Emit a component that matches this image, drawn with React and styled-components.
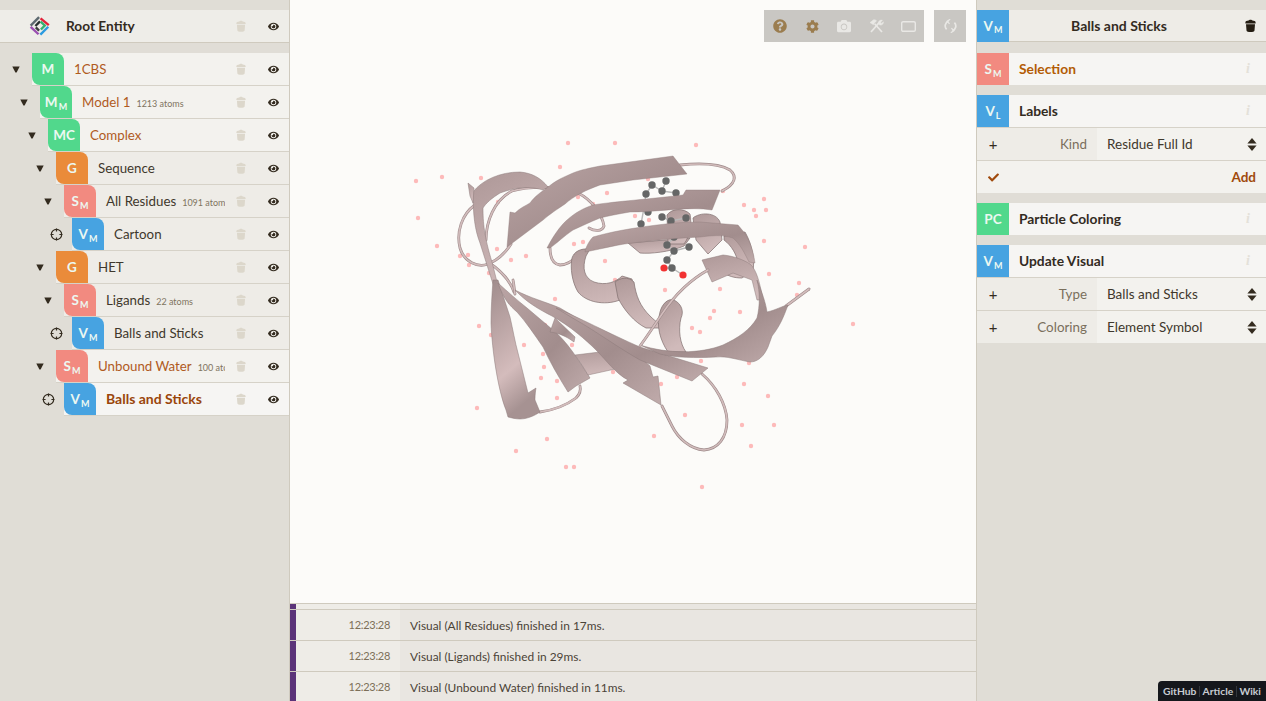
import React from 'react';
import styled, { createGlobalStyle } from 'styled-components';
import { FaEye, FaQuestionCircle, FaCog, FaCamera, FaCheck } from 'react-icons/fa';

const GlobalStyle = createGlobalStyle`
  html, body { margin: 0; padding: 0; height: 100%; overflow: hidden; }
  body {
    font-family: Lato, "Noto Sans", sans-serif;
    font-size: 14px;
    color: #332b1f;
    background: #e0ddd6;
  }
`;

const tones = {
  green: '#51d88c',
  orange: '#ea8b3a',
  pink: '#f28a80',
  blue: '#47a3e1',
};

const Page = styled.div`
  display: flex;
  height: 701px;
  width: 1266px;
  position: relative;
  overflow: hidden;
`;

const LeftPanel = styled.aside`
  width: 289px;
  flex: none;
  border-right: 1px solid #cfcabe;
  padding-top: 10px;
`;

const RightPanel = styled.aside`
  width: 289px;
  flex: none;
  border-left: 1px solid #cfcabe;
  padding-top: 10px;
`;

const Center = styled.main`
  flex: 1;
  min-width: 0;
  display: flex;
  flex-direction: column;
`;

const Viewport = styled.div`
  position: relative;
  height: 603px;
  flex: none;
  background: #fcfbf9;
  border-bottom: 1px solid #cfcabe;
  box-sizing: content-box;
`;

const Canvas = styled.svg`
  display: block;
  width: 686px;
  height: 603px;
`;

const Toolbar = styled.div`
  position: absolute;
  top: 10px;
  right: 10px;
  display: flex;
  gap: 10px;
`;

const ToolGroup = styled.div`
  display: flex;
  background: #c9c7c3;
`;

const ToolButton = styled.div`
  width: 32px;
  height: 32px;
  display: flex;
  align-items: center;
  justify-content: center;
  font-size: ${({ size }) => size || 14}px;
  color: ${({ active }) => (active ? '#9b7d4f' : '#e9e8e5')};
`;

const Log = styled.section`
  flex: 1;
  min-height: 0;
  overflow: hidden;
  background: #eeece7;
`;

const LogRow = styled.div`
  display: flex;
  height: ${({ stub }) => (stub ? 5 : 30)}px;
  border-bottom: 1px solid #cfcabe;
  font-size: 12px;
`;

const LogMark = styled.div`
  width: 6px;
  flex: none;
  background: #5b3379;
`;

const LogTime = styled.div`
  width: 104px;
  flex: none;
  padding-right: 10px;
  box-sizing: border-box;
  text-align: right;
  font-size: 11px;
  letter-spacing: -0.3px;
  line-height: 29px;
  color: #7c6f58;
`;

const LogMessage = styled.div`
  flex: 1;
  padding-left: 10px;
  font-size: 11.9px;
  line-height: 31px;
  background: #e9e6e1;
  color: #4b4337;
`;

const RootRow = styled.div`
  display: flex;
  align-items: center;
  height: 32px;
  background: #eeede8;
  border-bottom: 1px solid #cfcabe;
  margin-bottom: 10px;
`;

const LogoCell = styled.div`
  width: 66px;
  flex: none;
  display: flex;
  justify-content: center;
  padding-left: 14px;
  box-sizing: border-box;
`;

const RootTitle = styled.div`
  flex: 1;
  font-weight: 700;
  font-size: 13.7px;
  padding-bottom: 2px;
`;

const TreeRowWrap = styled.div`
  display: flex;
  align-items: stretch;
  height: 33px;
  margin-left: ${({ depth }) => depth * 8}px;
`;

const Gutter = styled.div`
  width: 32px;
  flex: none;
  display: flex;
  align-items: center;
  justify-content: center;
  padding-bottom: 1px;
  box-sizing: border-box;
`;

const RowBody = styled.div`
  flex: 1;
  min-width: 0;
  display: flex;
  align-items: center;
  height: 33px;
  box-sizing: border-box;
  border-bottom: 1px solid #d6d2c8;
  background: ${({ state }) =>
    state === 'current' ? '#f6f5f3' : state === 'path' ? '#f3f2ee' : '#eeece7'};
`;

const Badge = styled.div`
  width: 32px;
  height: 32px;
  flex: none;
  display: flex;
  align-items: center;
  justify-content: center;
  background: ${({ tone }) => tones[tone]};
  color: #ecf8f1;
  font-weight: 700;
  font-size: 13.5px;
  border-radius: ${({ square }) => (square ? '0' : '0 8px 0 8px')};
  & > sub {
    font-size: 9px;
    line-height: 1;
    margin: 8px 0 0 1px;
    vertical-align: baseline;
  }
`;

const RowTitle = styled.div`
  flex: 1;
  min-width: 0;
  padding-left: 10px;
  padding-bottom: ${({ state }) => (state === 'current' ? 2 : 0)}px;
  white-space: nowrap;
  overflow: hidden;
  font-size: ${({ state }) => (state === 'current' ? 14 : 13.3)}px;
  font-weight: ${({ state }) => (state === 'current' ? 700 : 400)};
  color: ${({ state }) =>
    state === 'current' ? '#9a450b' : state === 'path' ? '#b05b1e' : '#3f382c'};
`;

const RowNote = styled.small`
  font-size: 9px;
  margin-left: 6px;
  color: #7f745f;
`;

const IconCell = styled.div`
  width: 32px;
  flex: none;
  display: flex;
  align-items: center;
  justify-content: center;
  color: ${({ muted }) => (muted ? '#dcd7cb' : '#332b1f')};
  font-size: 11px;
`;

const PanelHeader = styled.div`
  display: flex;
  align-items: center;
  height: 32px;
  box-sizing: border-box;
  background: #eeece7;
  border-bottom: 1px solid #cfcabe;
  margin-bottom: 11px;
`;

const HeaderTitle = styled.div`
  flex: 1;
  text-align: center;
  font-weight: 700;
  font-size: 14px;
  padding-right: 5px;
`;

const Section = styled.section`
  margin-bottom: 10px;
`;

const SectionHead = styled.div`
  display: flex;
  align-items: center;
  height: 32px;
  background: #f6f5f3;
  border-bottom: ${({ open }) => (open ? '1px solid #d6d2c8' : 'none')};
`;

const SectionTitle = styled.div`
  flex: 1;
  padding-left: 10px;
  padding-bottom: 2px;
  font-weight: 700;
  font-size: 13.8px;
  color: ${({ accent }) => (accent ? '#b35c05' : '#332b1f')};
`;

const InfoMark = styled.span`
  width: 32px;
  text-align: center;
  padding-right: 2px;
  font-family: "Liberation Serif", serif;
  font-style: italic;
  font-weight: 700;
  font-size: 14px;
  color: #e4e1d9;
`;

const ControlRow = styled.div`
  display: flex;
  height: 33px;
  box-sizing: border-box;
  border-bottom: 1px solid #d6d2c8;
  background: #f3f2ee;
  &:last-child { border-bottom: none; height: 32px; }
`;

const ControlLabel = styled.div`
  width: 120px;
  flex: none;
  display: flex;
  align-items: center;
  background: #eeece7;
  color: #7a6f5c;
  font-size: 13.4px;
  padding-right: 10px;
  box-sizing: border-box;
`;

const PlusMark = styled.span`
  width: 32px;
  flex: none;
  text-align: center;
  color: #332b1f;
  font-size: 15px;
  line-height: 1;
`;

const LabelText = styled.span`
  flex: 1;
  text-align: right;
`;

const ControlValue = styled.div`
  flex: 1;
  display: flex;
  align-items: center;
  justify-content: space-between;
  padding: 0 9px 0 10px;
  font-size: 13.5px;
  color: #3f382c;
`;

const ActionRow = styled.div`
  display: flex;
  align-items: center;
  height: 32px;
  background: #f3f2ee;
`;

const CheckCell = styled.div`
  width: 32px;
  display: flex;
  justify-content: center;
  color: #a04a0c;
  font-size: 11px;
`;

const ActionText = styled.div`
  flex: 1;
  text-align: right;
  padding-right: 10px;
  font-weight: 700;
  font-size: 13.5px;
  color: #a04a0c;
`;

const Links = styled.nav`
  position: absolute;
  right: 0;
  bottom: 0;
  height: 20px;
  width: 108px;
  box-sizing: border-box;
  background: #15171c;
  border-top-left-radius: 4px;
  display: flex;
  align-items: center;
  justify-content: space-between;
  padding: 0 5px;
  font-size: 10.3px;
  font-weight: 700;
  color: #c8ccd2;
`;

const LinkSep = styled.i`
  width: 1px;
  height: 11px;
  background: #34373d;
`;

const Trash = ({ dark }) => (
  <svg
    width={dark ? 11 : 10}
    height={dark ? 14 : 12.7}
    viewBox="0 0 11 14"
    fill={dark ? '#241d12' : 'currentColor'}
  >
    <path d="M3.6 1.6C3.8.6 7.2.6 7.4 1.6 9.2 1.9 10.6 2.4 10.6 3.2V4.4H.4V3.2C.4 2.4 1.8 1.9 3.6 1.6Z" />
    <path d="M1 5.2H10L9.5 11.6C9.4 13.6 1.6 13.6 1.5 11.6Z" />
  </svg>
);

const Triangle = () => (
  <svg width="8" height="7" viewBox="0 0 8 7">
    <path d="M.3.6H7.7L4.6 6.4H3.4Z" fill="#332b1f" />
  </svg>
);

const Target = () => (
  <svg width="13" height="13" viewBox="0 0 13 13" fill="none" stroke="#332b1f" strokeWidth="1.2">
    <circle cx="6.5" cy="6.5" r="5.2" />
    <path d="M6.5 .6V3.6M6.5 9.4V12.4M.6 6.5H3.6M9.4 6.5H12.4" />
  </svg>
);

const UpDown = () => (
  <svg width="10" height="13" viewBox="0 0 10 13" fill="#332b1f">
    <path d="M5 0L9.6 5.4H.4Z" />
    <path d="M5 13L9.6 7.6H.4Z" />
  </svg>
);

const Logo = () => (
  <svg width="22" height="22" viewBox="0 0 24 24" fill="none" strokeWidth="2.6">
    <path d="M1.8 11.5L11 2.4" stroke="#5d6a70" />
    <path d="M12.6 3.6L21.6 11" stroke="#e2223a" />
    <path d="M21 12.8L12.4 21.4" stroke="#2b9be0" />
    <path d="M1.8 13L10.4 21" stroke="#9a4fb0" />
    <path d="M7 12L12 7" stroke="#27302f" />
    <path d="M12.6 7.2L17.2 11.4L13 15.8" stroke="#35b070" />
    <path d="M7.4 13.6L11 17" stroke="#3a3f3d" />
  </svg>
);

const RectIcon = () => (
  <svg width="15" height="11" viewBox="0 0 15 11" fill="none" stroke="currentColor" strokeWidth="1.4">
    <rect x=".7" y=".7" width="13.6" height="9.6" rx="1.4" />
  </svg>
);

const ToolsIcon = () => (
  <svg width="15" height="14" viewBox="0 0 15 14" fill="none" stroke="currentColor">
    <path d="M2 13L10.4 3.4" strokeWidth="1.7" />
    <path d="M9.4 4.6C9 2.4 11 .6 13.4 1.2L11.6 3.2 12.6 4.4 14.4 2.8C14.8 5 12.6 6.8 10.4 5.8Z" fill="currentColor" strokeWidth=".5" />
    <path d="M13 13L5.6 4.8" strokeWidth="1.7" />
    <path d="M1 3.6L4.6 .8C6 .6 7 1 7.6 2L5.8 3.4 4.4 5.8Z" fill="currentColor" strokeWidth=".5" />
  </svg>
);

const SyncIcon = () => (
  <svg width="13" height="14" viewBox="0 0 13 14" fill="none" stroke="currentColor" strokeWidth="1.7">
    <path d="M4.6 2.2A5 5 0 0 0 2.6 10.4" />
    <path d="M8.4 11.8A5 5 0 0 0 10.4 3.6" />
    <path d="M6.2 .2L3 2.4 5.6 4.8" strokeWidth="1.2" />
    <path d="M6.8 13.8L10 11.6 7.4 9.2" strokeWidth="1.2" />
  </svg>
);

const waters = [
  [416,181],[442,177],[481,178],[568,143],[615,143],[560,167],[579,174],[607,193],[578,197],[593,204],
  [498,202],[418,218],[437,246],[460,256],[468,255],[469,265],[497,249],[511,260],[526,256],[489,273],
  [574,244],[583,242],[574,263],[605,261],[615,280],[579,289],[555,299],[696,145],[648,179],[723,191],
  [744,205],[764,199],[754,210],[766,210],[756,216],[764,241],[805,247],[635,216],[649,220],[639,247],
  [715,222],[769,274],[799,283],[797,295],[665,290],[720,289],[479,326],[545,325],[524,345],[572,345],
  [544,367],[541,378],[557,381],[557,398],[477,408],[547,439],[613,372],[661,384],[677,377],[685,415],
  [654,436],[491,335],[543,354],[853,324],[714,311],[740,312],[710,318],[692,328],[700,332],[701,361],
  [749,363],[744,384],[768,396],[742,425],[774,425],[751,446],[516,451],[566,467],[574,467],[702,487],
];

const loops = [
  'M475 205C462 214 456 232 460 248C464 262 478 268 488 264C498 260 506 252 511 244',
  'M488 262C500 270 510 280 514 292',
  'M486 240C486 222 494 200 512 191C530 186 560 186 578 193C592 200 602 214 604 226C602 232 594 231 589 228',
  'M550 248C550 258 553 264 560 265C568 265 574 260 580 254',
  'M680 165C700 163 720 164 730 170C737 176 736 184 722 191',
  'M702 374C716 386 726 404 727 420C727 438 718 449 704 450C690 449 678 438 672 426C668 418 665 412 662 406',
  'M540 412C554 410 568 404 576 398C580 394 581 390 580 386',
  'M786 306L809 289',
  'M515 294C514 288 514 284 513 280',
];

const frontLoops = ['M708 270C690 280 674 296 662 314C654 326 646 338 640 346'];

const helices = [
  'M572 258C574 252 580 248 590 249L586 256C582 268 584 278 594 282C606 286 616 282 622 276L632 279C634 292 636 304 640 310L620 300C604 306 586 302 578 292C572 282 570 268 572 258Z',
  'M615 282C620 278 628 276 634 282C636 296 640 306 650 316C656 322 660 324 664 328L646 328C634 322 624 310 618 298Z',
  'M660 312C662 304 668 298 674 300C682 304 684 312 681 318C678 330 680 344 686 352L668 352C660 340 656 326 660 312Z',
  'M628 243L690 238L684 246C670 252 650 254 640 253Z',
  'M667 215C672 208 684 208 690 214C692 224 690 236 684 244L668 244Z',
  'M693 218C700 212 716 212 720 222L722 240L708 254L696 240Z',
  'M724 236L745 232C752 244 755 260 753 270L742 278C734 278 728 276 722 272L738 262C736 254 732 246 724 240Z',
];

const strands = [
  { fill: 'url(#rose)', d: 'M473 192C482 180 500 172 520 172C532 173 541 178 548 187L543 190C530 186 516 187 500 193C492 198 486 203 483 208C483 222 484 236 492 262L502 302L493 284L480 243C475 230 473 216 473 192Z' },
  { fill: 'url(#rose)', d: 'M468 183L474 188L473 203L470 196Z' },
  { fill: 'url(#stem)', d: 'M493 280L498 280L510 317C513 330 515 342 518 353L528 393L536 388C535 394 535 398 535 400L540 412C534 416 527 419 520 419C516 419 512 418 508 417L506 410C498 390 492 350 491 323C491 308 492 294 493 280Z' },
  { fill: 'url(#dusk)', d: 'M498 283C508 292 517 300 527 308L553 330C566 340 580 362 590 378L576 386L568 392C558 376 550 362 543 347C534 334 526 322 517 312C510 306 504 300 498 283Z' },
  { fill: 'url(#rose)', d: 'M575 355L633 348L650 358L647 362L588 375C584 368 580 362 575 355Z' },
  { fill: 'url(#dusk)', d: 'M550 332L555 318L575 337L574 342C566 336 558 333 550 332Z' },
  { fill: 'url(#dusk)', d: 'M515 290C530 298 546 302 560 308C574 316 586 324 600 330C612 338 622 346 636 352C640 358 646 362 650 366L653 377L658 376L661 405L623 383L628 380C616 374 606 360 596 350C586 340 570 326 552 316C540 310 526 302 515 290Z' },
  { fill: 'url(#dusk)', d: 'M556 308C576 316 610 334 640 347L708 368L692 381L640 360C622 350 594 330 576 320Z' },
  { fill: 'url(#rose)', d: 'M702 260L723 255C734 256 744 260 750 264C757 270 760 284 763 300L757 300L752 280L733 273L712 282Z' },
  { fill: 'url(#dusk)', d: 'M640 345C668 354 700 354 723 345C738 338 750 330 757 318C760 306 760 292 757 280C762 292 766 304 767 312C776 310 782 306 788 305C784 316 780 326 772 336L768 347C764 356 758 362 750 362C738 360 728 356 716 357C696 358 676 358 660 354Z' },
];

const upperStrands = [
  { fill: 'url(#dusk)', d: 'M673 156L687 174L633 180L600 185C586 190 574 196 565 204C556 210 550 214 543 220L507 247L510 212L515 213C520 208 525 206 530 203C535 196 541 192 547 188C556 180 564 177 573 173C580 170 590 168 600 166Z' },
  { fill: 'url(#dusk)', d: 'M547 248C552 238 560 226 567 220C576 212 584 208 593 205C610 202 640 200 683 195L686 190L720 190L712 210C690 206 660 212 630 212C618 214 608 216 600 218C590 222 582 226 573 230C564 236 556 244 550 248Z' },
  { fill: 'url(#dusk)', d: 'M585 252C586 246 590 240 593 237C610 232 632 228 657 225C672 223 686 222 700 222L738 225C742 230 746 234 747 237C752 246 754 256 755 263L749 262C744 252 740 244 733 238C720 234 710 236 700 237C680 238 656 240 633 243C620 244 606 248 585 252Z' },
];

const atomsLow = [[648,212],[662,217],[671,221],[686,218],[641,224],[674,237],[667,245],[674,251],[689,247],[667,260],[672,268]];
const atomsHigh = [[666,181],[652,185],[662,191],[646,194],[676,193]];
const bonds = 'M666 181L662 191L652 185L646 194L644 208L641 224M662 191L676 193M662 217L671 221L686 218M674 237L667 245L674 251L689 247M674 251L667 260L672 268L683 275M672 268L664 268';

const Ribbon = ({ d }) => (
  <g fill="none" strokeLinecap="round">
    <path d={d} stroke="#9e8a8a" strokeWidth="2.8" />
    <path d={d} stroke="#d2bcbc" strokeWidth="1.6" />
  </g>
);

const Protein = () => (
  <Canvas viewBox="290 0 686 603">
    <defs>
      <linearGradient id="rose" x1="0" y1="0" x2="0.3" y2="1">
        <stop offset="0" stopColor="#ae9898" />
        <stop offset="1" stopColor="#d0baba" />
      </linearGradient>
      <linearGradient id="stem" x1="0" y1="0" x2="0.3" y2="1">
        <stop offset="0" stopColor="#a08c8c" />
        <stop offset="0.7" stopColor="#d4bcbc" />
        <stop offset="1" stopColor="#a69292" />
      </linearGradient>
      <linearGradient id="dusk" x1="0" y1="0" x2="1" y2="1">
        <stop offset="0" stopColor="#bba5a5" />
        <stop offset="0.6" stopColor="#a28d8d" />
        <stop offset="1" stopColor="#c0abab" />
      </linearGradient>
    </defs>
    {waters.map(([x, y]) => (
      <circle key={`${x}-${y}`} cx={x} cy={y} r="2.2" fill="#fdbaba" />
    ))}
    {loops.map((d) => <Ribbon key={d} d={d} />)}
    {helices.map((d) => (
      <path key={d} d={d} fill="url(#rose)" stroke="#7f6e6e" strokeWidth="0.7" />
    ))}
    {strands.map(({ d, fill }) => (
      <path key={d} d={d} fill={fill} stroke="#8d7a7a" strokeWidth="0.5" />
    ))}
    {frontLoops.map((d) => <Ribbon key={d} d={d} />)}
    <path d={bonds} fill="none" stroke="#b9b9b9" strokeWidth="1.4" />
    {[...atomsHigh, ...atomsLow].map(([x, y]) => (
      <circle key={`${x}-${y}`} cx={x} cy={y} r="3.7" fill="#656666" />
    ))}
    <circle cx="664" cy="268" r="3.6" fill="#f23232" />
    <circle cx="683" cy="275" r="3.6" fill="#f23232" />
    {upperStrands.map(({ d, fill }) => (
      <path key={d} d={d} fill={fill} stroke="#8d7a7a" strokeWidth="0.4" />
    ))}
  </Canvas>
);

const tree = [
  { depth: 0, tone: 'green', main: 'M', title: '1CBS', state: 'path', control: 'toggle' },
  { depth: 1, tone: 'green', main: 'M', sub: 'M', title: 'Model 1', note: '1213 atoms', state: 'path', control: 'toggle' },
  { depth: 2, tone: 'green', main: 'MC', title: 'Complex', state: 'path', control: 'toggle' },
  { depth: 3, tone: 'orange', main: 'G', title: 'Sequence', control: 'toggle' },
  { depth: 4, tone: 'pink', main: 'S', sub: 'M', title: 'All Residues', note: '1091 atoms', control: 'toggle' },
  { depth: 5, tone: 'blue', main: 'V', sub: 'M', title: 'Cartoon', control: 'target' },
  { depth: 3, tone: 'orange', main: 'G', title: 'HET', control: 'toggle' },
  { depth: 4, tone: 'pink', main: 'S', sub: 'M', title: 'Ligands', note: '22 atoms', control: 'toggle' },
  { depth: 5, tone: 'blue', main: 'V', sub: 'M', title: 'Balls and Sticks', control: 'target' },
  { depth: 3, tone: 'pink', main: 'S', sub: 'M', title: 'Unbound Water', note: '100 atoms', state: 'path', control: 'toggle' },
  { depth: 4, tone: 'blue', main: 'V', sub: 'M', title: 'Balls and Sticks', state: 'current', control: 'target' },
];

const logEntries = [
  { id: 'all', message: 'Visual (All Residues) finished in 17ms.' },
  { id: 'ligands', message: 'Visual (Ligands) finished in 29ms.' },
  { id: 'water', message: 'Visual (Unbound Water) finished in 11ms.' },
];

const TreeRow = ({ item }) => (
  <TreeRowWrap depth={item.depth}>
    <Gutter>{item.control === 'toggle' ? <Triangle /> : <Target />}</Gutter>
    <RowBody state={item.state}>
      <Badge tone={item.tone}>
        {item.main}
        {item.sub && <sub>{item.sub}</sub>}
      </Badge>
      <RowTitle state={item.state}>
        {item.title}
        {item.note && <RowNote>{item.note}</RowNote>}
      </RowTitle>
      <IconCell muted><Trash /></IconCell>
      <IconCell><FaEye /></IconCell>
    </RowBody>
  </TreeRowWrap>
);

const Control = ({ label, value }) => (
  <ControlRow>
    <ControlLabel>
      <PlusMark>+</PlusMark>
      <LabelText>{label}</LabelText>
    </ControlLabel>
    <ControlValue>
      {value}
      <UpDown />
    </ControlValue>
  </ControlRow>
);

const App = () => (
  <Page>
    <GlobalStyle />
    <LeftPanel>
      <RootRow>
        <LogoCell><Logo /></LogoCell>
        <RootTitle>Root Entity</RootTitle>
        <IconCell muted><Trash /></IconCell>
        <IconCell><FaEye /></IconCell>
      </RootRow>
      {tree.map((item) => (
        <TreeRow key={`${item.depth}-${item.title}`} item={item} />
      ))}
    </LeftPanel>
    <Center>
      <Viewport>
        <Protein />
        <Toolbar>
          <ToolGroup>
            <ToolButton active size={14}><FaQuestionCircle /></ToolButton>
            <ToolButton active size={13}><FaCog /></ToolButton>
            <ToolButton size={14}><FaCamera /></ToolButton>
            <ToolButton><ToolsIcon /></ToolButton>
            <ToolButton><RectIcon /></ToolButton>
          </ToolGroup>
          <ToolGroup>
            <ToolButton><SyncIcon /></ToolButton>
          </ToolGroup>
        </Toolbar>
      </Viewport>
      <Log>
        <LogRow stub>
          <LogMark />
          <LogTime />
          <LogMessage />
        </LogRow>
        {logEntries.map((entry) => (
          <LogRow key={entry.id}>
            <LogMark />
            <LogTime>12:23:28</LogTime>
            <LogMessage>{entry.message}</LogMessage>
          </LogRow>
        ))}
      </Log>
    </Center>
    <RightPanel>
      <PanelHeader>
        <Badge tone="blue" square>V<sub>M</sub></Badge>
        <HeaderTitle>Balls and Sticks</HeaderTitle>
        <IconCell><Trash dark /></IconCell>
      </PanelHeader>
      <Section>
        <SectionHead>
          <Badge tone="pink" square>S<sub>M</sub></Badge>
          <SectionTitle accent>Selection</SectionTitle>
          <InfoMark>i</InfoMark>
        </SectionHead>
      </Section>
      <Section>
        <SectionHead open>
          <Badge tone="blue" square>V<sub>L</sub></Badge>
          <SectionTitle>Labels</SectionTitle>
          <InfoMark>i</InfoMark>
        </SectionHead>
        <Control label="Kind" value="Residue Full Id" />
        <ActionRow>
          <CheckCell><FaCheck /></CheckCell>
          <ActionText>Add</ActionText>
        </ActionRow>
      </Section>
      <Section>
        <SectionHead>
          <Badge tone="green" square>PC</Badge>
          <SectionTitle>Particle Coloring</SectionTitle>
          <InfoMark>i</InfoMark>
        </SectionHead>
      </Section>
      <Section>
        <SectionHead open>
          <Badge tone="blue" square>V<sub>M</sub></Badge>
          <SectionTitle>Update Visual</SectionTitle>
          <InfoMark>i</InfoMark>
        </SectionHead>
        <Control label="Type" value="Balls and Sticks" />
        <Control label="Coloring" value="Element Symbol" />
      </Section>
    </RightPanel>
    <Links>
      <span>GitHub</span>
      <LinkSep />
      <span>Article</span>
      <LinkSep />
      <span>Wiki</span>
    </Links>
  </Page>
);

export default App;
